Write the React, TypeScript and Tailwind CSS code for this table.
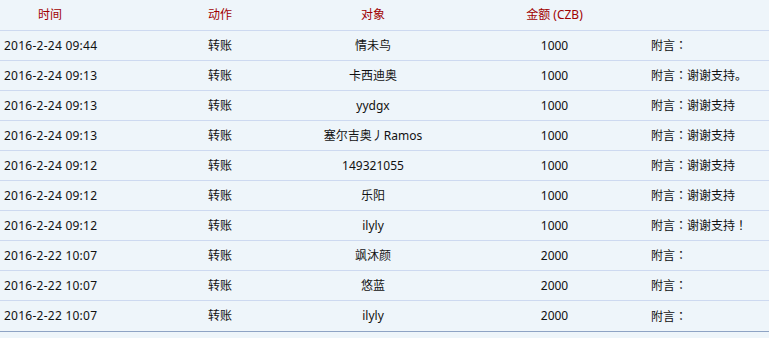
const rows = [
  { time: "2016-2-24 09:44", target: "情未鸟", amount: "1000", note: "", mark: "" },
  { time: "2016-2-24 09:13", target: "卡西迪奥", amount: "1000", note: "谢谢支持。", mark: "" },
  { time: "2016-2-24 09:13", target: "yydgx", amount: "1000", note: "谢谢支持", mark: "" },
  { time: "2016-2-24 09:13", target: "塞尔吉奥丿Ramos", amount: "1000", note: "谢谢支持", mark: "" },
  { time: "2016-2-24 09:12", target: "149321055", amount: "1000", note: "谢谢支持", mark: "" },
  { time: "2016-2-24 09:12", target: "乐阳", amount: "1000", note: "谢谢支持", mark: "" },
  { time: "2016-2-24 09:12", target: "ilyly", amount: "1000", note: "谢谢支持", mark: "！" },
  { time: "2016-2-22 10:07", target: "飒沐颜", amount: "2000", note: "", mark: "" },
  { time: "2016-2-22 10:07", target: "悠蓝", amount: "2000", note: "", mark: "" },
  { time: "2016-2-22 10:07", target: "ilyly", amount: "2000", note: "", mark: "" },
];

const font = { fontFamily: '"Noto Sans", "Noto Sans CJK SC", sans-serif' };
// centred full-width punctuation, as in the screenshot
const centredPunct = { fontFamily: '"Noto Sans CJK TC", sans-serif' };

export default function App() {
  return (
    <div className="w-[769px] h-[338px] bg-[#eef5fa] text-[12px] overflow-hidden" style={font}>
      {/* header */}
      <div className="flex h-[31px] items-center border-b border-[#cdd9f0] text-[#a00000]">
        <div className="w-[140px] pl-[38px]">时间</div>
        <div className="w-[160px] text-center">动作</div>
        <div className="w-[146px] text-center">对象</div>
        <div className="w-[205px] pl-[12px] text-center">金额 (CZB)</div>
        <div className="flex-1"></div>
      </div>

      {rows.map((r, i) => (
        <div
          key={i}
          className={
            "flex h-[30px] items-center text-[#111] border-b " +
            (i === rows.length - 1 ? "border-[#8ea3c4] h-[31px]" : "border-[#cdd9f0]")
          }
        >
          <div className="w-[140px] pl-[4px] whitespace-nowrap tracking-[0.25px]">{r.time}</div>
          <div className="w-[160px] text-center">转账</div>
          <div className="w-[146px] text-center whitespace-nowrap">{r.target}</div>
          <div className="w-[205px] pl-[12px] text-center">{r.amount}</div>
          <div className="flex-1 whitespace-nowrap">
            附言<span style={centredPunct}>：</span>{r.note}
            {r.mark && <span style={centredPunct}>{r.mark}</span>}
          </div>
        </div>
      ))}
    </div>
  );
}
